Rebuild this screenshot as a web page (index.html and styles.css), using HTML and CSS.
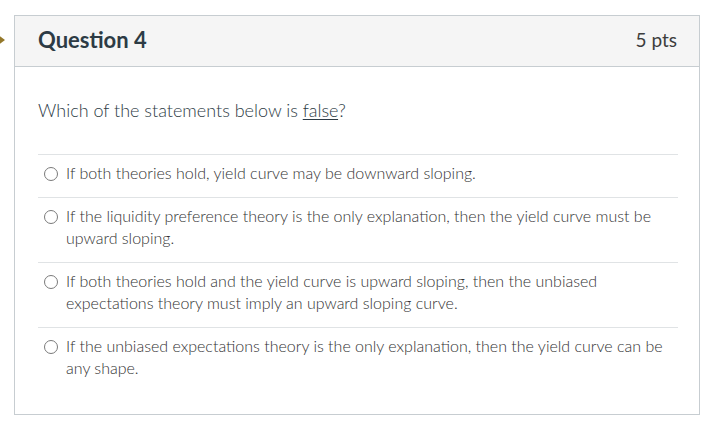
FILE: index.html
```html
<!DOCTYPE html>
<html>
<head>
<meta charset="utf-8">
<link rel="stylesheet" href="styles.css">
</head>
<body>
<div class="page">
  <div class="marker"></div>
  <div class="card">
    <div class="header">
      <h2 class="title">Question 4</h2>
      <span class="pts">5 pts</span>
    </div>
    <div class="body">
      <p class="question">Which of the statements below is <u>false</u>?</p>
      <div class="answers">
        <label class="answer"><span class="radio"></span><span class="text">If both theories hold, yield curve may be downward sloping.</span></label>
        <label class="answer"><span class="radio"></span><span class="text">If the liquidity preference theory is the only explanation, then the yield curve must be upward sloping.</span></label>
        <label class="answer"><span class="radio"></span><span class="text">If both theories hold and the yield curve is upward sloping, then the unbiased expectations theory must imply an upward sloping curve.</span></label>
        <label class="answer"><span class="radio"></span><span class="text">If the unbiased expectations theory is the only explanation, then the yield curve can be any shape.</span></label>
      </div>
    </div>
  </div>
</div>
</body>
</html>
```
FILE: styles.css
```css
html, body {
  margin: 0;
  padding: 0;
  background: #fff;
}
body {
  font-family: Lato, "Open Sans", sans-serif;
  color: #2d3b45;
}
.page {
  position: relative;
  padding: 15px 2px 0 14px;
}
.marker {
  position: absolute;
  left: -6px;
  top: 32px;
  width: 0;
  height: 0;
  border-top: 8px solid transparent;
  border-bottom: 8px solid transparent;
  border-left: 11px solid #94782a;
}
.card {
  border: 1px solid #c7cdd1;
  width: 684px;
  height: 398px;
}
.header {
  display: flex;
  justify-content: space-between;
  align-items: center;
  background: #f5f5f5;
  border-bottom: 1px solid #c7cdd1;
  height: 46px;
  padding: 0 22px 4px 23px;
}
.title {
  margin: 0;
  font-size: 22px;
  font-weight: 700;
  color: #2d3b45;
}
.pts {
  font-size: 19px;
  font-weight: 400;
  color: #3d3d3d;
}
.body {
  padding: 31px 21px 0 23px;
}
.question {
  margin: 0 0 32px 0;
  font-size: 18px;
  line-height: 24px;
  font-weight: 300;
  color: #2d3b45;
}
.question u {
  text-underline-offset: 2px;
}
.answers {
  border-top: 1px solid #e0e3e5;
}
.answer {
  display: flex;
  align-items: flex-start;
  padding: 7px 0 12px 6px;
  border-bottom: 1px solid #e0e3e5;
  font-size: 16px;
  line-height: 22.5px;
  font-weight: 300;
  color: #333;
}
.answer:last-child {
  border-bottom: none;
}
.radio {
  flex: none;
  width: 12px;
  height: 12px;
  border: 1px solid #7a7a7a;
  border-radius: 50%;
  margin: 5px 8px 0 0;
  background: #fff;
}
.text {
  flex: 1;
}
```
